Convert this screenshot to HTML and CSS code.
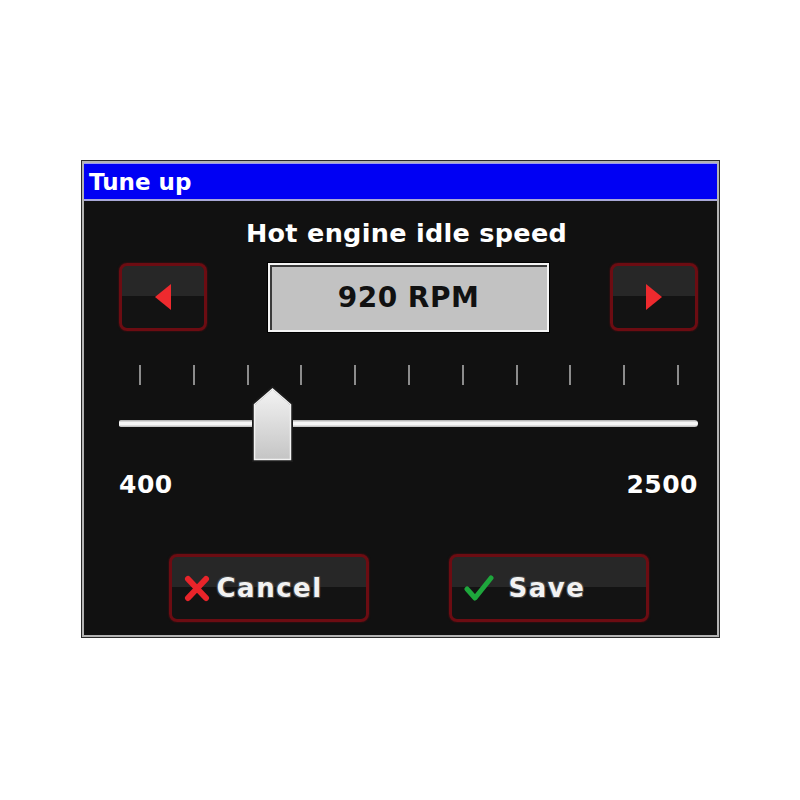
FILE: index.html
```html
<!DOCTYPE html>
<html>
<head>
<meta charset="utf-8">
<link rel="stylesheet" href="styles.css">
</head>
<body>
<div class="dialog">
  <div class="titlebar">Tune up</div>
  <div class="content">
    <div class="heading">Hot engine idle speed</div>
    <div class="value-row">
      <div class="btn arrow-btn">
        <svg width="16" height="26" viewBox="0 0 16 26"><polygon points="16,0 16,26 0,13" fill="#ee2a2e"/></svg>
      </div>
      <div class="value-box">920 RPM</div>
      <div class="btn arrow-btn">
        <svg width="16" height="26" viewBox="0 0 16 26"><polygon points="0,0 0,26 16,13" fill="#ee2a2e"/></svg>
      </div>
    </div>
    <div class="ticks">
      <span class="tick"></span><span class="tick"></span><span class="tick"></span><span class="tick"></span>
      <span class="tick"></span><span class="tick"></span><span class="tick"></span><span class="tick"></span>
      <span class="tick"></span><span class="tick"></span><span class="tick"></span>
    </div>
    <div class="slider">
      <div class="track"></div>
      <svg class="thumb" style="left:133px" width="41" height="76" viewBox="0 0 41 76">
        <defs>
          <linearGradient id="tg" x1="0" y1="0" x2="0" y2="1">
            <stop offset="0" stop-color="#f4f4f4"/>
            <stop offset="1" stop-color="#c4c4c4"/>
          </linearGradient>
        </defs>
        <polygon points="1.5,18 20.5,1.5 39.5,18 39.5,74.5 1.5,74.5" fill="url(#tg)" stroke="#1a1a1a" stroke-width="3"/>
        <polygon points="2.5,18.5 20.5,3 38.5,18.5 38.5,73.5 2.5,73.5" fill="none" stroke="#f2f2f2" stroke-width="1.5"/>
      </svg>
    </div>
    <div class="range">
      <span>400</span>
      <span>2500</span>
    </div>
    <div class="actions">
      <div class="btn action-btn">
        <svg class="icon" width="26" height="27" viewBox="0 0 26 27">
          <path d="M4 4 L22 23 M22 4 L4 23" stroke="#e8242a" stroke-width="6" stroke-linecap="round"/>
        </svg>
        <span class="label cancel-label">Cancel</span>
      </div>
      <div class="btn action-btn">
        <svg class="icon" width="30" height="28" viewBox="0 0 30 28">
          <path d="M3 15 L11 24 L27 4" fill="none" stroke="#1ea63c" stroke-width="5" stroke-linecap="round" stroke-linejoin="round"/>
        </svg>
        <span class="label save-label">Save</span>
      </div>
    </div>
  </div>
</div>
</body>
</html>
```

FILE: styles.css
```css
html, body {
  margin: 0;
  padding: 0;
  background: #ffffff;
}

body {
  padding: 160px 0 0 81px;
  font-family: "DejaVu Sans", Verdana, sans-serif;
}

.dialog {
  width: 639px;
  height: 478px;
  box-sizing: border-box;
  background: #111111;
  border: 1px solid #2a2a2a;
  box-shadow: inset 0 0 0 2px #b4b4b4;
  padding: 2px;
  display: flex;
  flex-direction: column;
}

.titlebar {
  height: 38px;
  box-sizing: border-box;
  background: #0000f4;
  border-top: 1px solid #9a9af0;
  border-bottom: 2px solid #a8a8d8;
  color: #ffffff;
  font-weight: bold;
  font-size: 23px;
  line-height: 36px;
  padding-left: 5px;
}

.content {
  flex: 1;
  padding: 0 19px 0 35px;
  display: flex;
  flex-direction: column;
}

.heading {
  margin-top: 17px;
  height: 30px;
  line-height: 30px;
  text-align: center;
  color: #ffffff;
  font-weight: bold;
  font-size: 25.5px;
  letter-spacing: 0.3px;
  padding-right: 4px;
}

.value-row {
  margin-top: 15px;
  height: 69px;
  display: flex;
  justify-content: space-between;
  align-items: stretch;
}

.btn {
  box-sizing: border-box;
  border: 3px solid #6c0c12;
  border-radius: 8px;
  background: linear-gradient(to bottom, #272727 0%, #272727 48%, #131313 48%, #131313 100%);
  box-shadow: 0 0 2px rgba(150, 10, 20, 0.6);
  display: flex;
  align-items: center;
}

.arrow-btn {
  width: 88px;
  height: 68px;
  justify-content: center;
}

.value-box {
  margin-left: 61px;
  margin-right: 61px;
  flex: 1;
  box-sizing: border-box;
  background: #c2c2c2;
  border: 2px solid #f4f4f4;
  box-shadow: inset 2px 2px 0 #3a3a3a, 0 0 0 1px #000;
  color: #111111;
  font-weight: bold;
  font-size: 28px;
  letter-spacing: 0.5px;
  display: flex;
  align-items: center;
  justify-content: center;
}

.ticks {
  margin-top: 33px;
  height: 20px;
  padding: 0 19px 0 20px;
  display: flex;
  justify-content: space-between;
}

.tick {
  width: 2px;
  height: 20px;
  background: #8c8c8c;
}

.slider {
  position: relative;
  height: 76px;
}

.track {
  margin-top: 35px;
  height: 7px;
  box-sizing: border-box;
  border-radius: 2px 4px 4px 2px;
  background: linear-gradient(to bottom, #a8a8a8 0%, #f6f6f6 35%, #f6f6f6 65%, #b8b8b8 100%);
}

.thumb {
  position: absolute;
  top: 1px;
}

.range {
  margin-top: 9px;
  height: 30px;
  line-height: 30px;
  display: flex;
  justify-content: space-between;
  color: #ffffff;
  font-weight: bold;
  font-size: 25px;
  letter-spacing: 0.5px;
}

.actions {
  margin-top: 54px;
  display: flex;
  justify-content: center;
  gap: 80px;
}

.action-btn {
  width: 200px;
  height: 68px;
  padding-left: 12px;
}

.icon {
  flex: none;
}

.label {
  color: #f2f2f2;
  font-weight: bold;
  font-size: 26px;
  letter-spacing: 1.5px;
  text-shadow: 1px 1px 0 #444, -1px -1px 0 #444, 1px -1px 0 #444, -1px 1px 0 #444;
}

.cancel-label {
  margin-left: 7px;
}

.save-label {
  margin-left: 15px;
}
```
